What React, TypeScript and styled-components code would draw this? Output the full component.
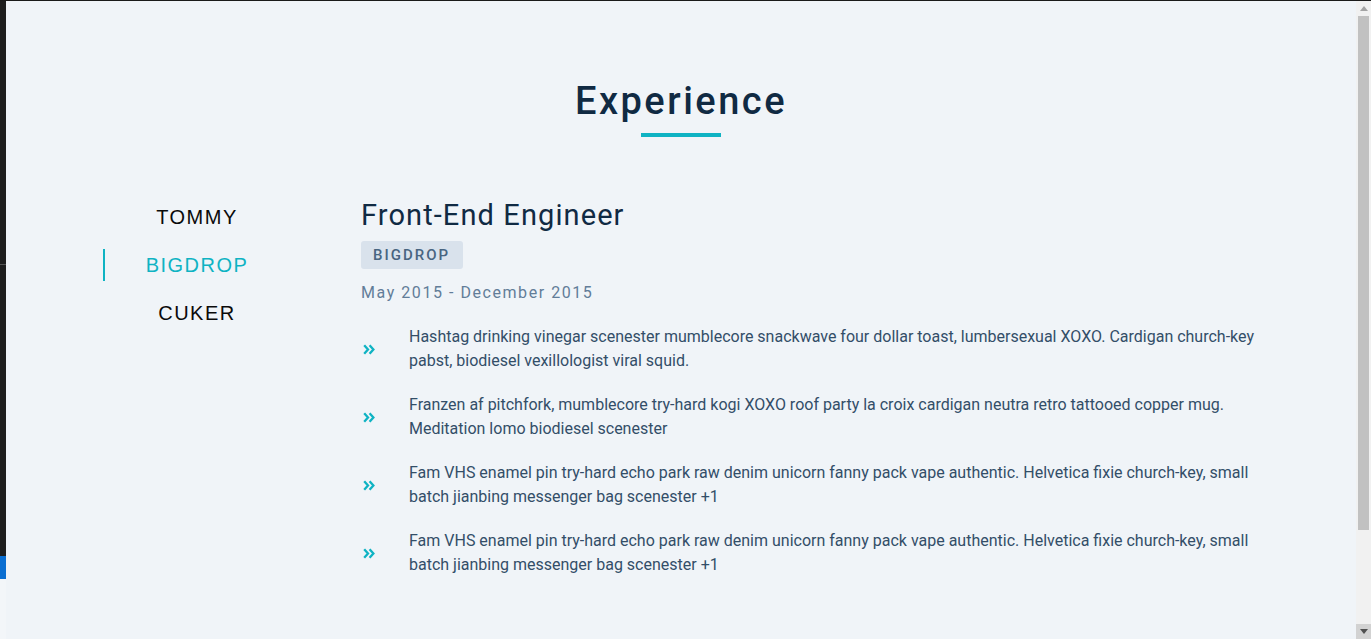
import React, { useState } from "react";
import styled, { createGlobalStyle } from "styled-components";

const GlobalStyle = createGlobalStyle`
  html, body { margin: 0; padding: 0; height: 100%; overflow: hidden; }
  body { background: #f0f4f8; font-family: Roboto, "Liberation Sans", sans-serif; }
  * { box-sizing: border-box; }
`;

const Frame = styled.div`
  display: flex;
  height: 639px;
  border-top: 1px solid #1a1a1a;
`;

const EdgeStrip = styled.div`
  width: 6px;
  display: flex;
  flex-direction: column;
`;

const EdgeDark = styled.div`
  flex: 1;
  background: #1e1e1e;
  display: flex;
  flex-direction: column;
  justify-content: flex-start;
`;

const EdgeLine = styled.div`
  margin-top: 263px;
  height: 1px;
  background: #555;
`;

const EdgeBlue = styled.div`
  height: 23px;
  background: #0a6ed1;
`;

const EdgeLight = styled.div`
  height: 60px;
  background: #f3f6f9;
`;

const Main = styled.main`
  flex: 1;
  background: #f0f4f8;
  padding: 0 97px;
`;

const Scrollbar = styled.div`
  width: 15px;
  background: #f1f1f1;
  display: flex;
  flex-direction: column;
  align-items: center;
`;

const ScrollButton = styled.div<{ $pressed?: boolean }>`
  width: 15px;
  height: 15px;
  display: flex;
  align-items: center;
  justify-content: center;
  background: ${(p) => (p.$pressed ? "#d2d2d2" : "#f1f1f1")};
`;

const Thumb = styled.div`
  width: 11px;
  height: 514px;
  background: #c1c1c1;
`;

const Track = styled.div`
  flex: 1;
`;

const Heading = styled.h2`
  margin: 77px 0 0;
  text-align: center;
  font-family: Roboto, sans-serif;
  font-weight: 500;
  font-size: 38px;
  line-height: 46px;
  letter-spacing: 2.5px;
  color: #102a43;
`;

const Underline = styled.div`
  width: 80px;
  height: 4px;
  background: #0fb3c3;
  margin: 9px auto 0;
`;

const Body = styled.div`
  display: flex;
  margin-top: 56px;
`;

const Nav = styled.nav`
  width: 258px;
  display: flex;
  flex-direction: column;
  gap: 16px;
  padding-top: 8px;
`;

const NavItem = styled.button<{ $active?: boolean }>`
  width: 186px;
  height: 32px;
  border: none;
  border-left: 2px solid ${(p) => (p.$active ? "#0fb3c3" : "transparent")};
  background: transparent;
  padding: 0;
  font-family: "Liberation Sans", Arial, sans-serif;
  font-size: 20px;
  letter-spacing: 1.5px;
  color: ${(p) => (p.$active ? "#0fb3c3" : "#0a0a0a")};
  cursor: pointer;
  text-align: center;
`;

const Content = styled.div`
  flex: 1;
`;

const JobTitle = styled.h3`
  margin: 4px 0 0;
  font-family: Roboto, sans-serif;
  font-weight: 400;
  font-size: 29px;
  line-height: 36px;
  letter-spacing: 1.1px;
  color: #102a43;
`;

const Badge = styled.span`
  display: inline-flex;
  align-items: center;
  height: 28px;
  margin-top: 8px;
  padding: 0 13px 0 12px;
  border-radius: 3px;
  background: #d9e2ec;
  color: #486581;
  font-family: Roboto, sans-serif;
  font-weight: 500;
  font-size: 15px;
  letter-spacing: 2px;
`;

const Dates = styled.div`
  margin-top: 12px;
  font-family: Roboto, sans-serif;
  font-size: 16px;
  line-height: 24px;
  letter-spacing: 1.55px;
  color: #627d98;
`;

const List = styled.ul`
  list-style: none;
  margin: 20px 0 0;
  padding: 0;
  display: flex;
  flex-direction: column;
  gap: 20px;
`;

const ListItem = styled.li`
  display: flex;
  align-items: center;
`;

const IconCell = styled.span`
  width: 48px;
  flex-shrink: 0;
  display: flex;
  align-items: center;
  padding-left: 2px;
`;

const ItemText = styled.p`
  margin: 0;
  font-family: Roboto, sans-serif;
  font-size: 16px;
  line-height: 24px;
  color: #334e68;
`;

const DoubleChevron = () => (
  <svg width="12" height="11" viewBox="0 0 12 11" fill="none">
    <path d="M1.2 1.2 L5 5.5 L1.2 9.8" stroke="#0fb3c3" strokeWidth="2.3" strokeLinejoin="miter" />
    <path d="M6.6 1.2 L10.4 5.5 L6.6 9.8" stroke="#0fb3c3" strokeWidth="2.3" strokeLinejoin="miter" />
  </svg>
);

const Arrow = ({ up, color }: { up?: boolean; color: string }) => (
  <svg width="8" height="5" viewBox="0 0 8 5">
    <path d={up ? "M0 5 L4 0 L8 5 Z" : "M0 0 L8 0 L4 5 Z"} fill={color} />
  </svg>
);

const companies = ["TOMMY", "BIGDROP", "CUKER"];

const items = [
  "Hashtag drinking vinegar scenester mumblecore snackwave four dollar toast, lumbersexual XOXO. Cardigan church-key pabst, biodiesel vexillologist viral squid.",
  "Franzen af pitchfork, mumblecore try-hard kogi XOXO roof party la croix cardigan neutra retro tattooed copper mug. Meditation lomo biodiesel scenester",
  "Fam VHS enamel pin try-hard echo park raw denim unicorn fanny pack vape authentic. Helvetica fixie church-key, small batch jianbing messenger bag scenester +1",
  "Fam VHS enamel pin try-hard echo park raw denim unicorn fanny pack vape authentic. Helvetica fixie church-key, small batch jianbing messenger bag scenester +1",
];

export default function App() {
  const [active, setActive] = useState(1);
  return (
    <>
      <GlobalStyle />
      <Frame>
        <EdgeStrip>
          <EdgeDark>
            <EdgeLine />
          </EdgeDark>
          <EdgeBlue />
          <EdgeLight />
        </EdgeStrip>
        <Main>
          <Heading>Experience</Heading>
          <Underline />
          <Body>
            <Nav>
              {companies.map((c, i) => (
                <NavItem key={c} $active={i === active} onClick={() => setActive(i)}>
                  {c}
                </NavItem>
              ))}
            </Nav>
            <Content>
              <JobTitle>Front-End Engineer</JobTitle>
              <Badge>BIGDROP</Badge>
              <Dates>May 2015 - December 2015</Dates>
              <List>
                {items.map((t, i) => (
                  <ListItem key={i}>
                    <IconCell>
                      <DoubleChevron />
                    </IconCell>
                    <ItemText>{t}</ItemText>
                  </ListItem>
                ))}
              </List>
            </Content>
          </Body>
        </Main>
        <Scrollbar>
          <ScrollButton>
            <Arrow up color="#a3a3a3" />
          </ScrollButton>
          <Thumb />
          <Track />
          <ScrollButton $pressed>
            <Arrow color="#505050" />
          </ScrollButton>
        </Scrollbar>
      </Frame>
    </>
  );
}
